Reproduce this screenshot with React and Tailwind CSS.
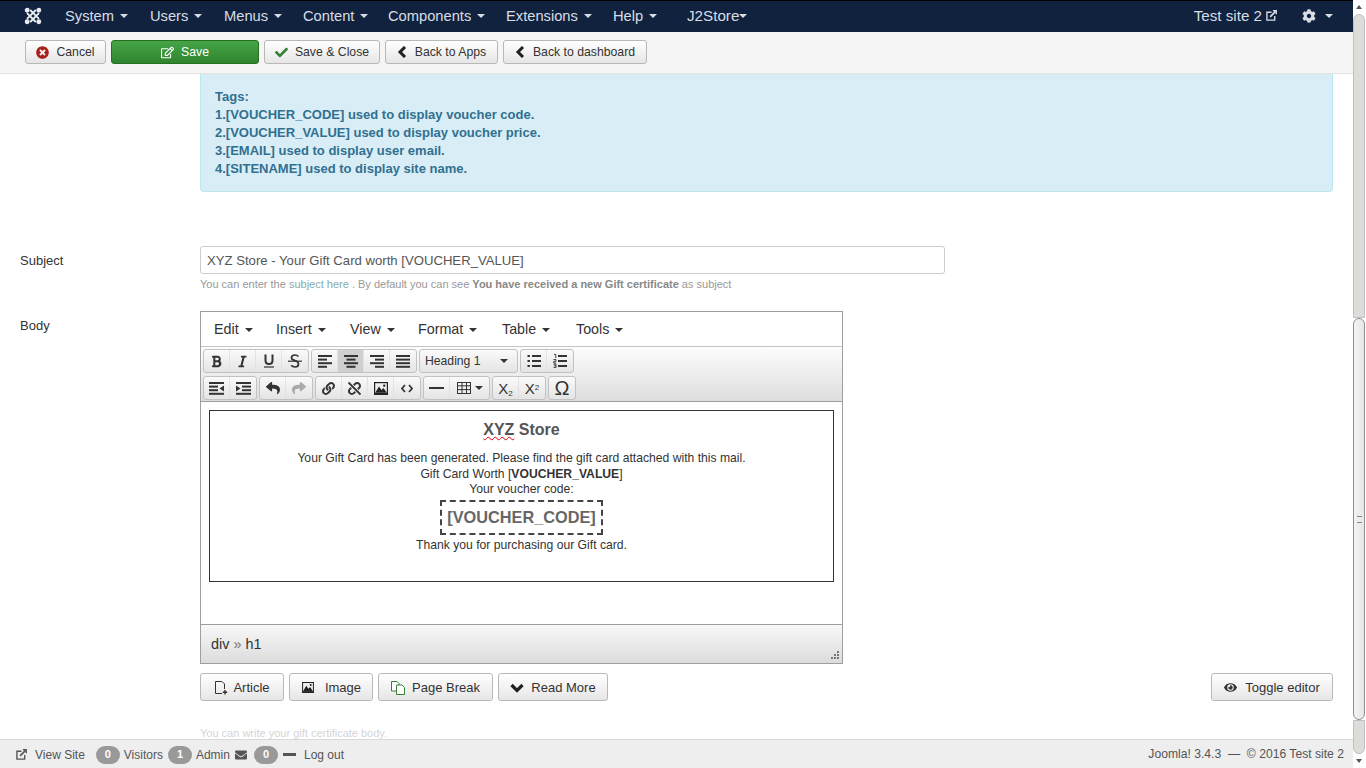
import React from 'react';
import { FaTimesCircle, FaCheck, FaRegEdit, FaCog, FaEye, FaEnvelope, FaLink, FaUnlink, FaReply, FaShare, FaBold, FaItalic } from 'react-icons/fa';

const font = "font-['Liberation_Sans',Arial,sans-serif]";

function Caret({ className = 'border-t-[#333]' }) {
    return <span className={`inline-block w-0 h-0 border-x-4 border-x-transparent border-t-4 ${className}`} />;
}

function JoomlaLogo() {
    return (
        <svg width="18" height="18" viewBox="0 0 18 18" fill="#e8ebf0" stroke="#e8ebf0" strokeWidth="1.9">
            <path d="M3 6.2 L11.8 15 M6.2 3 L15 11.8 M15 6.2 L6.2 15 M11.8 3 L3 11.8" fill="none" />
            <circle cx="3.2" cy="3.2" r="1.5" />
            <circle cx="14.8" cy="3.2" r="1.5" />
            <circle cx="3.2" cy="14.8" r="1.5" />
            <circle cx="14.8" cy="14.8" r="1.5" />
        </svg>
    );
}

function LinkOut({ size = 11 }) {
    return (
        <svg width={size} height={size} viewBox="0 0 12 12" fill="none" stroke="currentColor" strokeWidth="1.5">
            <path d="M6 2.5 H1 V11 H9.5 V6.5" />
            <path d="M4.5 7.5 L10.5 1.5" strokeWidth="1.8" />
            <path d="M7.5 0.8 H11.2 V4.5" />
        </svg>
    );
}

function ChevronLeft() {
    return (
        <svg width="10" height="12" viewBox="0 0 10 12" fill="none" stroke="#222" strokeWidth="3">
            <path d="M8 1 L3 6 L8 11" />
        </svg>
    );
}

function TopBar() {
    const items = [
        ['System', 'w-[85px]'], ['Users', 'w-[74px]'], ['Menus', 'w-[79px]'], ['Content', 'w-[85px]'],
        ['Components', 'w-[118px]'], ['Extensions', 'w-[107px]'], ['Help', 'w-[74px]'],
    ];
    return (
        <div className="h-8 shrink-0 bg-[#10223e] border-t border-black flex items-center pb-px text-[#d8dde5] text-[14.7px]">
            <div className="w-[65px] pl-[24px] flex items-center"><JoomlaLogo /></div>
            {items.map(([name, width]) => (
                <div key={name} className={`${width} flex items-center gap-[6px]`}>
                    {name} <Caret className="border-t-[#d8dde5]" />
                </div>
            ))}
            <div className="flex items-center text-[15.2px]">J2Store<Caret className="border-t-[#d8dde5]" /></div>
            <div className="ml-auto flex items-center">
                <span className="text-[15.2px]">Test site 2</span>
                <span className="ml-[4px]"><LinkOut /></span>
                <FaCog className="ml-[25px] text-[14px]" />
                <Caret className="ml-[9px] border-t-[#d8dde5]" />
                <div className="w-[20px]" />
            </div>
        </div>
    );
}

function ActionButton({ children, className = '' }) {
    return (
        <button className={`h-6 flex items-center justify-center rounded-[3px] border border-[#b8b8b8] bg-gradient-to-b from-white to-[#e6e6e6] text-[12.25px] text-[#333] ${className}`}>
            {children}
        </button>
    );
}

function Toolbar() {
    return (
        <div className="h-[42px] shrink-0 bg-[#f5f5f5] border-b border-[#e3e3e3] flex items-center gap-[5px] pl-[25px] pr-[13px] pb-px">
            <ActionButton className="w-[81px] gap-[7px]"><FaTimesCircle className="text-[#a8201a] text-[13px]" />Cancel</ActionButton>
            <button className="h-6 w-[148px] flex items-center justify-center gap-[7px] rounded-[3px] border border-[#24701f] bg-gradient-to-b from-[#46a546] to-[#2f842f] text-[12.25px] text-white">
                <FaRegEdit className="text-[13px]" />Save
            </button>
            <ActionButton className="w-[116px] gap-[7px]"><FaCheck className="text-[#378137] text-[13px]" />Save &amp; Close</ActionButton>
            <ActionButton className="w-[113px] gap-[8px]"><ChevronLeft />Back to Apps</ActionButton>
            <ActionButton className="w-[144px] gap-[8px]"><ChevronLeft />Back to dashboard</ActionButton>
        </div>
    );
}

function ToolIcon({ children, active, muted, w = 'w-[26px]' }) {
    return (
        <div className={`h-[22px] ${w} flex items-center justify-center border-r border-[#e2e2e2] last:border-r-0 text-[13px] ${active ? 'bg-[#cfcfcf]' : ''} ${muted ? 'text-[#aaa]' : 'text-[#333]'}`}>
            {children}
        </div>
    );
}

function ToolGroup({ children }) {
    return (
        <div className="flex rounded-[3px] border border-[#c2c2c2] bg-gradient-to-b from-[#fafafa] to-[#e4e4e4]">
            {children}
        </div>
    );
}

// bars for the align buttons, x offset and width of each line
function Bars({ rows }) {
    return (
        <svg width="14" height="13" viewBox="0 0 14 13" fill="#333">
            {rows.map(([x, w], i) => (
                <rect key={i} x={x} y={i * 3.6} width={w} height="2" />
            ))}
        </svg>
    );
}

function IndentIcon({ flip }) {
    return (
        <svg width="15" height="13" viewBox="0 0 15 13" fill="#333" style={flip ? { transform: 'scaleX(-1)' } : undefined}>
            <rect x="0" y="0" width="15" height="2" />
            <rect x="6" y="3.6" width="9" height="2" />
            <rect x="6" y="7.2" width="9" height="2" />
            <rect x="0" y="10.8" width="15" height="2" />
            <path d="M0 3.5 L4.5 6.5 L0 9.5 Z" />
        </svg>
    );
}

function ListIcon({ ordered }) {
    return (
        <svg width="14" height="14" viewBox="0 0 14 14" fill="#333">
            <rect x="5" y="1" width="9" height="2" />
            <rect x="5" y="6" width="9" height="2" />
            <rect x="5" y="11" width="9" height="2" />
            {ordered ? (
                <path d="M1 0.5 H2.8 V4 M0.5 5.5 H3 V7.3 H0.8 V9 H3.2 M0.5 10.2 H3 V13.6 H0.5 M1 11.9 H3" fill="none" stroke="#333" strokeWidth="0.9" />
            ) : (
                <>
                    <rect x="0.5" y="1" width="2.4" height="2" />
                    <rect x="0.5" y="6" width="2.4" height="2" />
                    <rect x="0.5" y="11" width="2.4" height="2" />
                </>
            )}
        </svg>
    );
}

function ImageIcon({ size = 14, height = 13 }) {
    return (
        <svg width={size} height={height} viewBox="0 0 14 13">
            <rect x="0" y="0" width="14" height="13" fill="#222" />
            <rect x="1.2" y="1.2" width="11.6" height="9.6" fill="#eee" />
            <path d="M1.2 10.8 L5 4.5 L7.5 8 L9.5 6 L12.8 10.8 Z" fill="#222" />
            <circle cx="10.2" cy="3.6" r="1.2" fill="#222" />
        </svg>
    );
}

function CodeIcon() {
    return (
        <svg width="12" height="9" viewBox="0 0 12 9" fill="none" stroke="#333" strokeWidth="1.7">
            <path d="M4 1 L1 4.5 L4 8 M8 1 L11 4.5 L8 8" />
        </svg>
    );
}

function TableIcon() {
    return (
        <svg width="14" height="12" viewBox="0 0 14 12" fill="none" stroke="#333" strokeWidth="1">
            <rect x="0.5" y="0.5" width="13" height="11" />
            <path d="M0.5 3.8 H13.5 M0.5 7.6 H13.5 M5 0.5 V11.5 M9.5 0.5 V11.5" />
        </svg>
    );
}

function UnderlineIcon() {
    return (
        <svg width="12" height="14" viewBox="0 0 12 14" fill="none" stroke="#333" strokeWidth="2">
            <path d="M2.5 0.5 V6.5 Q2.5 10 6 10 Q9.5 10 9.5 6.5 V0.5" />
            <rect x="1" y="12.4" width="10" height="1.2" fill="#333" stroke="none" />
        </svg>
    );
}

function StrikeIcon() {
    return (
        <svg width="14" height="14" viewBox="0 0 14 14" fill="none" stroke="#333" strokeWidth="1.7">
            <path d="M10.5 2.5 Q9 1 7 1 Q3.5 1 3.5 3.7 Q3.5 5.5 7 6.5 Q10.5 7.6 10.5 10 Q10.5 13 7 13 Q4.6 13 3.2 11.3" />
            <rect x="0" y="6.6" width="14" height="1.2" fill="#333" stroke="none" />
        </svg>
    );
}

function Editor() {
    const menus = [['Edit', 'w-[62px]'], ['Insert', 'w-[74px]'], ['View', 'w-[68px]'], ['Format', 'w-[84px]'], ['Table', 'w-[74px]'], ['Tools', '']];
    const left = [[0, 14], [0, 9], [0, 14], [0, 9]];
    const center = [[0, 14], [2.5, 9], [0, 14], [2.5, 9]];
    const right = [[0, 14], [5, 9], [0, 14], [5, 9]];
    const justify = [[0, 14], [0, 14], [0, 14], [0, 14]];
    return (
        <div className="w-[643px] h-[353px] border border-[#9e9e9e] flex flex-col bg-white">
            <div className="h-[35px] shrink-0 border-b border-[#c5c5c5] flex items-center pl-[13px] pt-px text-[14.3px] text-[#333]">
                {menus.map(([m, width]) => (
                    <div key={m} className={`${width} flex items-center gap-[6px]`}>{m}<Caret /></div>
                ))}
            </div>
            <div className="h-[55px] shrink-0 border-b border-[#9e9e9e] bg-gradient-to-b from-[#fdfdfd] to-[#dddddd] pl-[2px] pt-[2px] flex flex-col gap-[3px]">
                <div className="flex gap-[2px]">
                    <ToolGroup>
                        <ToolIcon><FaBold /></ToolIcon>
                        <ToolIcon><FaItalic /></ToolIcon>
                        <ToolIcon><UnderlineIcon /></ToolIcon>
                        <ToolIcon><StrikeIcon /></ToolIcon>
                    </ToolGroup>
                    <ToolGroup>
                        <ToolIcon><Bars rows={left} /></ToolIcon>
                        <ToolIcon active><Bars rows={center} /></ToolIcon>
                        <ToolIcon><Bars rows={right} /></ToolIcon>
                        <ToolIcon><Bars rows={justify} /></ToolIcon>
                    </ToolGroup>
                    <ToolGroup>
                        <div className="w-[97px] h-[22px] flex items-center justify-between pl-[5px] pr-[9px] text-[12.2px] text-[#333]">Heading 1<Caret /></div>
                    </ToolGroup>
                    <ToolGroup>
                        <ToolIcon><ListIcon /></ToolIcon>
                        <ToolIcon><ListIcon ordered /></ToolIcon>
                    </ToolGroup>
                </div>
                <div className="flex gap-[2px]">
                    <ToolGroup>
                        <ToolIcon><IndentIcon flip /></ToolIcon>
                        <ToolIcon><IndentIcon /></ToolIcon>
                    </ToolGroup>
                    <ToolGroup>
                        <ToolIcon><FaReply className="text-[14px]" /></ToolIcon>
                        <ToolIcon muted><FaShare className="text-[14px]" /></ToolIcon>
                    </ToolGroup>
                    <ToolGroup>
                        <ToolIcon><FaLink /></ToolIcon>
                        <ToolIcon><FaUnlink /></ToolIcon>
                        <ToolIcon><ImageIcon /></ToolIcon>
                        <ToolIcon><CodeIcon /></ToolIcon>
                    </ToolGroup>
                    <ToolGroup>
                        <ToolIcon><span className="block w-[15px] h-[2px] bg-[#333]" /></ToolIcon>
                        <ToolIcon w="w-[39px]"><span className="flex items-center gap-[4px]"><TableIcon /><Caret /></span></ToolIcon>
                    </ToolGroup>
                    <ToolGroup>
                        <ToolIcon><span className="text-[15px] leading-none">X<sub className="text-[8px]">2</sub></span></ToolIcon>
                        <ToolIcon><span className="text-[15px] leading-none">X<sup className="text-[8px]">2</sup></span></ToolIcon>
                    </ToolGroup>
                    <ToolGroup>
                        <ToolIcon><span className="text-[20px] leading-none">Ω</span></ToolIcon>
                    </ToolGroup>
                </div>
            </div>
            <div className="flex-1 pt-2 px-2">
                <div className="h-[172px] border border-[#333] text-center text-[12.16px] leading-[15.6px] text-[#333] pt-[8px]">
                    <h1 className="text-[16px] font-bold text-[#555] leading-[22px] mb-[10px]">
                        <span className="underline decoration-wavy decoration-red-600 decoration-1">XYZ</span> Store
                    </h1>
                    <div>Your Gift Card has been generated. Please find the gift card attached with this mail.</div>
                    <div>Gift Card Worth [<b>VOUCHER_VALUE</b>]</div>
                    <div>Your voucher code:</div>
                    <div className="flex justify-center mt-[2px]">
                        <div className="border-2 border-dashed border-[#444] px-[5px] pt-px h-[35px] flex items-center text-[16.3px] font-bold text-[#666]">[VOUCHER_CODE]</div>
                    </div>
                    <div className="mt-[3px]">Thank you for purchasing our Gift card.</div>
                </div>
            </div>
            <div className="h-[39px] shrink-0 border-t border-[#9e9e9e] bg-gradient-to-b from-[#f8f8f8] to-[#dcdcdc] flex items-center justify-between pl-[10px] pr-[3px] pt-px text-[14.4px] text-[#333]">
                <span>div <span className="text-[#777]">»</span> h1</span>
                <svg width="10" height="10" viewBox="0 0 10 10" className="self-end mb-[2px]" fill="#777">
                    <rect x="8" y="0" width="2" height="2" /><rect x="5" y="3" width="2" height="2" /><rect x="8" y="3" width="2" height="2" />
                    <rect x="2" y="6" width="2" height="2" /><rect x="5" y="6" width="2" height="2" /><rect x="8" y="6" width="2" height="2" />
                </svg>
            </div>
        </div>
    );
}

function EditorButton({ children, className = '' }) {
    return (
        <button className={`h-7 pt-px flex items-center justify-center rounded-[3px] border border-[#b8b8b8] bg-gradient-to-b from-white to-[#e6e6e6] text-[13px] text-[#333] ${className}`}>
            {children}
        </button>
    );
}

function ArticleIcon() {
    return (
        <svg width="14" height="15" viewBox="0 0 14 15" fill="none" stroke="#333" strokeWidth="1">
            <path d="M8 13.5 H1.5 V1.5 H8 L10.5 4 V9" />
            <path d="M11 10 V14.5 M8.8 12.3 H13.2" strokeWidth="1.4" />
        </svg>
    );
}

function PageBreakIcon() {
    return (
        <svg width="14" height="14" viewBox="0 0 14 14" fill="#fff" stroke="#378137" strokeWidth="1">
            <path d="M0.5 0.5 H6 L8 2.5 V10 H0.5 Z" />
            <path d="M5.5 4 H11 L13.5 6.5 V13.5 H5.5 Z" />
        </svg>
    );
}

function HeavyChevronDown() {
    return (
        <svg width="14" height="10" viewBox="0 0 14 10" fill="none" stroke="#222" strokeWidth="3.2">
            <path d="M1.5 2 L7 7.5 L12.5 2" />
        </svg>
    );
}

function Footer() {
    const badge = 'w-[24px] h-[18px] rounded-full bg-[#999] text-white text-[11px] font-bold flex items-center justify-center';
    return (
        <div className="h-[29px] pt-px shrink-0 bg-[#eeeeee] border-t border-[#d9d9d9] flex items-center text-[12px] text-[#555] pl-[16px] pr-[9px]">
            <span className="mr-[8px]"><LinkOut /></span>
            <span className="mr-[11px]">View Site</span>
            <span className={`${badge} mr-[4px]`}>0</span>
            <span className="mr-[5px]">Visitors</span>
            <span className={`${badge} mr-[4px]`}>1</span>
            <span className="mr-[5px]">Admin</span>
            <FaEnvelope className="text-[12px] mr-[7px]" />
            <span className={`${badge} mr-[5px]`}>0</span>
            <span className="w-[13px] h-[3px] bg-[#555] mr-[8px]" />
            <span>Log out</span>
            <span className="ml-auto text-[12.15px]">Joomla! 3.4.3 &nbsp;— &nbsp;© 2016 Test site 2</span>
        </div>
    );
}

function Scrollbar() {
    return (
        <div className="absolute right-0 top-0 w-[13px] h-full bg-white flex flex-col items-start">
            <div className="h-[14px] w-[12px] flex items-center justify-center"><span className="w-0 h-0 border-x-[3px] border-x-transparent border-b-4 border-b-[#555]" /></div>
            <div className="w-[12px] h-[304px] bg-[#dcdcd8] rounded-t-md border border-[#c0c0c0]" />
            <div className="w-[12px] h-[402px] bg-gradient-to-r from-[#f4f4f4] to-[#e6e6e6] border border-[#909090] rounded-md flex items-center justify-center">
                <span className="w-[5px] h-[7px] border-y border-[#888]" />
            </div>
            <div className="flex-1 w-[12px] bg-[#dcdcd8] rounded-b-md border border-[#c0c0c0]" />
            <div className="h-[14px] w-[12px] flex items-center justify-center"><span className="w-0 h-0 border-x-[3px] border-x-transparent border-t-4 border-t-[#555]" /></div>
        </div>
    );
}

export default function App() {
    return (
        <div className={`relative h-screen w-full overflow-hidden flex flex-col bg-white ${font} pr-[13px]`}>
            <TopBar />
            <Toolbar />
            <div className="flex-1 overflow-hidden text-[13px] text-[#333]">
                <div className="ml-[200px] mr-[20px] h-[118px] bg-[#d9edf7] border border-[#bce8f1] border-t-0 rounded-b-[4px] pl-[14px] pt-[14px] font-bold text-[#31708f] leading-[18px]">
                    <div>Tags:</div>
                    <div>1.[VOUCHER_CODE] used to display voucher code.</div>
                    <div>2.[VOUCHER_VALUE] used to display voucher price.</div>
                    <div>3.[EMAIL] used to display user email.</div>
                    <div>4.[SITENAME] used to display site name.</div>
                </div>
                <div className="flex mt-[54px]">
                    <label className="w-[200px] pl-[20px] pt-[5px]">Subject</label>
                    <div>
                        <div className="w-[745px] h-7 pt-px border border-[#ccc] rounded-[3px] px-[6px] flex items-center text-[13.15px] text-[#555]">XYZ Store - Your Gift Card worth [VOUCHER_VALUE]</div>
                        <div className="text-[11px] text-[#999] mt-[4px] leading-[13px]">You can enter the <span className="text-[#8aa]">subject here</span> . By default you can see <b className="text-[#888]">You have received a new Gift certificate</b> as subject</div>
                    </div>
                </div>
                <div className="flex mt-[20px]">
                    <label className="w-[200px] pl-[20px] pt-[5px]">Body</label>
                    <div className="flex-1 mr-[20px]">
                        <Editor />
                        <div className="flex gap-[5px] mt-[9px]">
                            <EditorButton className="w-[84px] gap-[5px]"><ArticleIcon />Article</EditorButton>
                            <EditorButton className="w-[84px] gap-[10px]"><ImageIcon height={11} />Image</EditorButton>
                            <EditorButton className="w-[115px] gap-[7px]"><PageBreakIcon />Page Break</EditorButton>
                            <EditorButton className="w-[110px] gap-[7px]"><HeavyChevronDown />Read More</EditorButton>
                            <EditorButton className="w-[122px] gap-[8px] ml-auto"><FaEye className="text-[13px]" />Toggle editor</EditorButton>
                        </div>
                        <div className="text-[11px] leading-[16px] text-[#d4d4d8] mt-[24px]">You can write your gift certificate body.</div>
                    </div>
                </div>
            </div>
            <Footer />
            <Scrollbar />
        </div>
    );
}
